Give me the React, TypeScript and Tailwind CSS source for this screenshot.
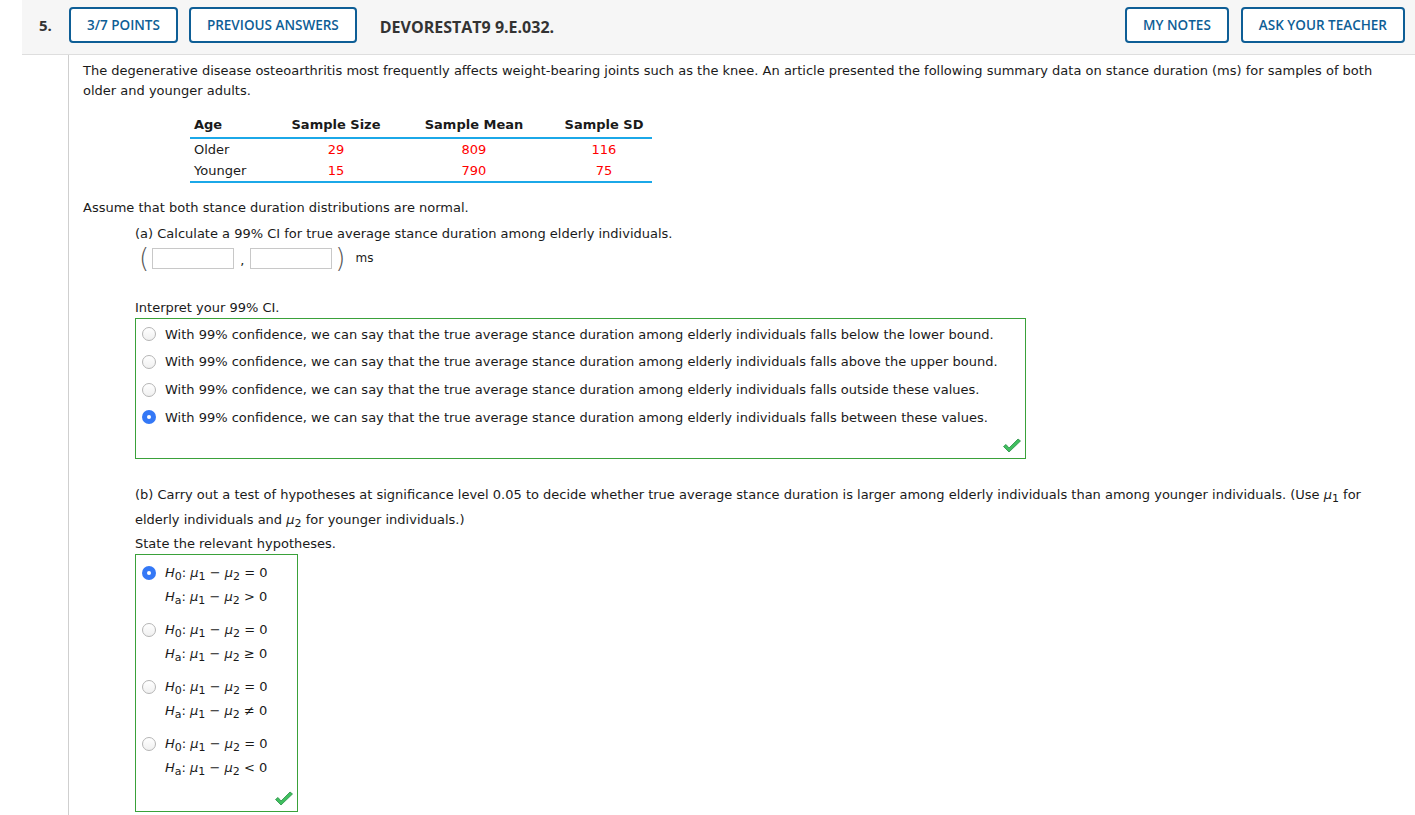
import React from "react";

const Radio = ({ checked }: { checked?: boolean }) =>
  checked ? (
    <span className="w-[14px] h-[14px] rounded-full bg-[#3478f6] flex items-center justify-center shrink-0">
      <span className="w-[4px] h-[4px] rounded-full bg-white" />
    </span>
  ) : (
    <span className="block w-[14px] h-[14px] rounded-full border border-[#b5b5b5] bg-gradient-to-b from-white to-[#f0f0f0] shrink-0" />
  );

const Check = () => (
  <svg width="20" height="16" viewBox="0 0 20 16">
    <path d="M1.5 8.5 L7 14 L18.5 3 L16 1 L7 10 L4 6.5 Z" fill="#3fbf5f" stroke="#2a8f45" strokeWidth="0.8" />
  </svg>
);

const Mu = ({ n }: { n: number }) => (
  <span>
    <i>μ</i>
    <sub className="text-[11px] relative top-[3px] align-baseline">{n}</sub>
  </span>
);

const Hyp = ({ sub, op }: { sub: string; op: string }) => (
  <span className="whitespace-pre">
    <i>H</i>
    <sub className="text-[11px] align-baseline relative top-[3px]">{sub}</sub>: <Mu n={1} /> − <Mu n={2} /> {op} 0
  </span>
);

const HeaderBtn = ({ label }: { label: string }) => (
  <div className="h-[36px] px-[16px] flex items-center border-2 border-[#0e5e96] rounded-[4px] text-[#0e5e96] bg-white font-['Open_Sans',sans-serif] font-semibold text-[13.5px]">
    {label}
  </div>
);

const interp = [
  "falls below the lower bound.",
  "falls above the upper bound.",
  "falls outside these values.",
  "falls between these values.",
];

const hyps = [">", "≥", "≠", "<"];

export default function App() {
  return (
    <div className="min-h-screen bg-white text-[#1a1a1a] font-['DejaVu_Sans',sans-serif] text-[13px]">
      <div className="ml-[22px] h-[55px] bg-[#f6f6f6] border-b border-[#dedede] flex items-start pt-[7px] pl-[17px] pr-[10px] font-['Open_Sans',sans-serif]">
        <div className="font-bold text-[15px] text-[#333] mt-[7px] w-[30px]">5.</div>
        <div className="flex gap-[11px]">
          <HeaderBtn label="3/7 POINTS" />
          <HeaderBtn label="PREVIOUS ANSWERS" />
        </div>
        <div className="ml-[23px] mt-[8px] font-bold text-[16px] text-[#333]">DEVORESTAT9 9.E.032.</div>
        <div className="ml-auto flex gap-[12px]">
          <HeaderBtn label="MY NOTES" />
          <HeaderBtn label="ASK YOUR TEACHER" />
        </div>
      </div>

      <div className="ml-[68px] border-l border-[#cfcfcf] pl-[14px] pr-[20px] pt-[6px] pb-[10px] min-h-[760px]">
        <p className="leading-[20px]">
          The degenerative disease osteoarthritis most frequently affects weight-bearing joints such as the knee. An article presented the following summary data on stance duration (ms) for samples of both older and younger adults.
        </p>

        <table className="ml-[107px] mt-[14px] w-[462px] border-collapse table-fixed">
          <thead>
            <tr className="border-b-2 border-[#1ba8e8]">
              <th className="w-[90px] text-left font-bold pl-[4px] h-[23px] align-top">Age</th>
              <th className="w-[112px] font-bold h-[23px] align-top">Sample Size</th>
              <th className="w-[164px] font-bold h-[23px] align-top">Sample Mean</th>
              <th className="w-[96px] font-bold h-[23px] align-top">Sample SD</th>
            </tr>
          </thead>
          <tbody>
            <tr>
              <td className="pl-[4px] h-[22px]">Older</td>
              <td className="text-center text-[#ff0000]">29</td>
              <td className="text-center text-[#ff0000]">809</td>
              <td className="text-center text-[#ff0000]">116</td>
            </tr>
            <tr className="border-b-2 border-[#1ba8e8]">
              <td className="pl-[4px] h-[22px]">Younger</td>
              <td className="text-center text-[#ff0000]">15</td>
              <td className="text-center text-[#ff0000]">790</td>
              <td className="text-center text-[#ff0000]">75</td>
            </tr>
          </tbody>
        </table>

        <p className="mt-[15px]">Assume that both stance duration distributions are normal.</p>

        <div className="ml-[52px]">
          <p className="mt-[6px]">(a) Calculate a 99% CI for true average stance duration among elderly individuals.</p>
          <div className="flex items-center mt-[2px] ml-[4px]">
            <span className="text-[26px] font-extralight text-[#555] leading-none">(</span>
            <span className="ml-[3px] w-[82px] h-[21px] border border-[#c8c8c8]" />
            <span className="mx-[6px] mt-[6px]">,</span>
            <span className="w-[82px] h-[21px] border border-[#c8c8c8]" />
            <span className="ml-[3px] text-[26px] font-extralight text-[#555] leading-none">)</span>
            <span className="ml-[10px] text-[12px]">ms</span>
          </div>

          <p className="mt-[27px]">Interpret your 99% CI.</p>
          <div className="w-[891px] h-[141px] border border-[#3aa13a] pt-[2px] px-[6px] relative">
            {interp.map((t, i) => (
              <div key={i} className="flex items-center gap-[9px] h-[27.7px]">
                <Radio checked={i === 3} />
                <span>With 99% confidence, we can say that the true average stance duration among elderly individuals {t}</span>
              </div>
            ))}
            <div className="absolute right-[3px] bottom-[4px]">
              <Check />
            </div>
          </div>

          <p className="mt-[23px] leading-[25px]">
            (b) Carry out a test of hypotheses at significance level 0.05 to decide whether true average stance duration is larger among elderly individuals than among younger individuals. (Use <Mu n={1} /> for elderly individuals and <Mu n={2} /> for younger individuals.)
          </p>
          <p className="mt-[2px] leading-[20px]">State the relevant hypotheses.</p>
          <div className="w-[163px] h-[258px] border border-[#3aa13a] pt-[6px] px-[6px] relative">
            {hyps.map((op, i) => (
              <div key={i} className="flex gap-[9px] mb-[9px]">
                <div className="mt-[5px]">
                  <Radio checked={i === 0} />
                </div>
                <div className="leading-[24px]">
                  <div><Hyp sub="0" op="=" /></div>
                  <div><Hyp sub="a" op={op} /></div>
                </div>
              </div>
            ))}
            <div className="absolute right-[3px] bottom-[4px]">
              <Check />
            </div>
          </div>
        </div>
      </div>
    </div>
  );
}
